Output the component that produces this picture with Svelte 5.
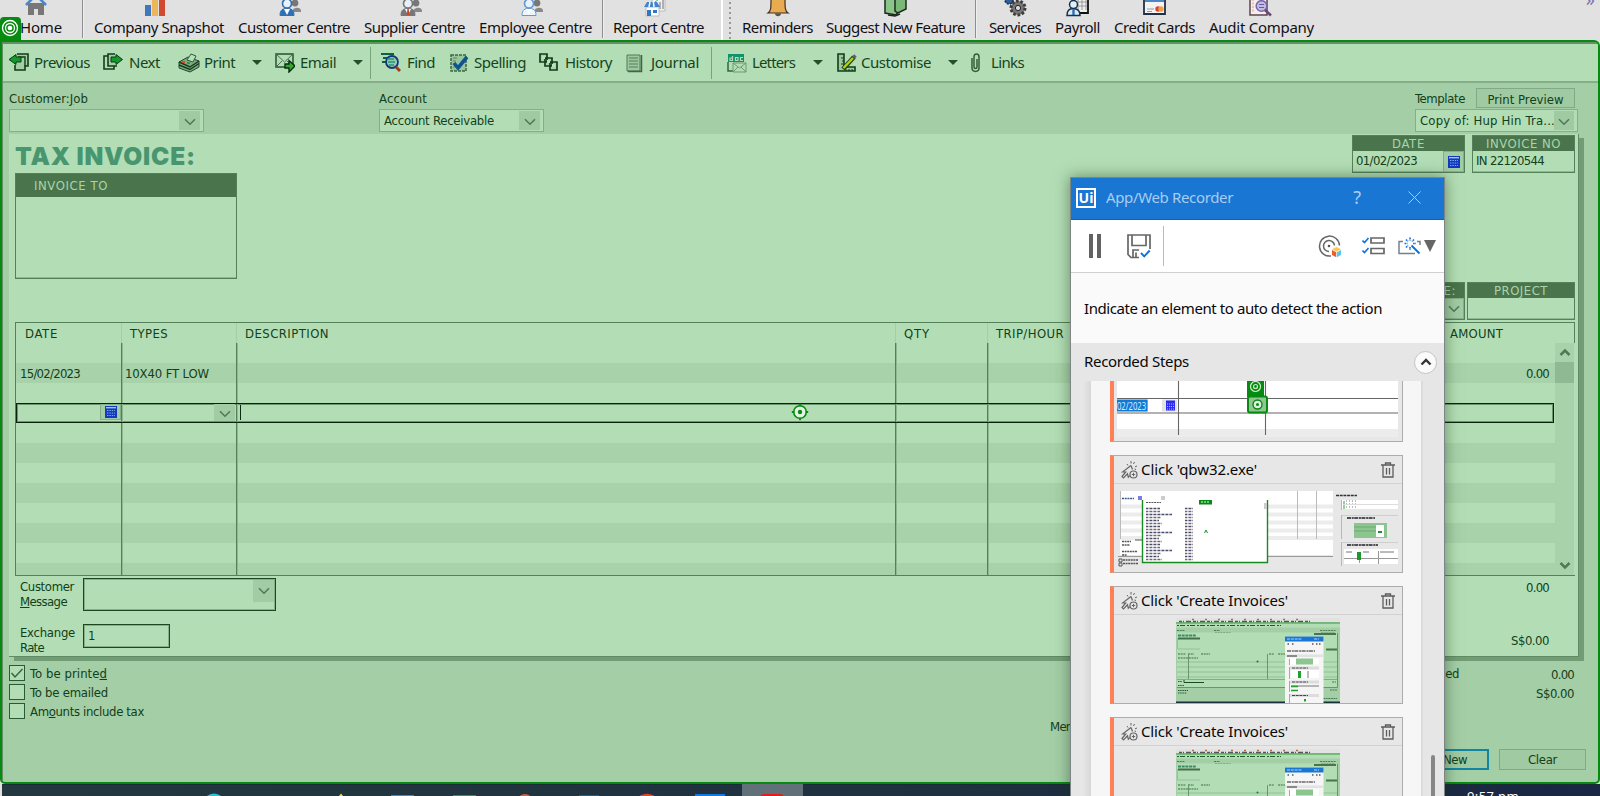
<script>
  // Spreads a label's letters so that it takes the given width.
  function fit(node, width) {
    const n = [...node.textContent].length;
    const natural = node.getBoundingClientRect().width;
    node.style.letterSpacing = (width - natural) / n + 'px';
  }

  const nav = [
    { id: 'home', label: 'Home', gap: 20, w: 42, dx: -5 },
    { sep: true, gap: 20 },
    { id: 'chart', label: 'Company Snapshot', gap: 11, w: 130, dx: -4 },
    { id: 'customer', label: 'Customer Centre', gap: 14, w: 112, dx: -4 },
    { id: 'supplier', label: 'Supplier Centre', gap: 14, w: 101, dx: -4 },
    { id: 'employee', label: 'Employee Centre', gap: 14, w: 113, dx: -4 },
    { sep: true, gap: 10 },
    { id: 'report', label: 'Report Centre', gap: 10, w: 91, dx: -4 },
    { grip: true, gap: 17 },
    { id: 'bell', label: 'Reminders', gap: 10, w: 71, dx: 0 },
    { id: 'suggest', label: 'Suggest New Feature', gap: 13, w: 139, dx: 0 },
    { sep: true, gap: 10 },
    { id: 'gears', label: 'Services', gap: 13, w: 52, dx: 1 },
    { id: 'payroll', label: 'Payroll', gap: 14, w: 45, dx: 0 },
    { id: 'card', label: 'Credit Cards', gap: 14, w: 81, dx: 0 },
    { id: 'audit', label: 'Audit Company', gap: 14, w: 105, dx: -1 }
  ];

  const tools = [
    { id: 'prev', label: 'Previous', gap: 6, iw: 20, tg: 5, w: 56 },
    { id: 'next', label: 'Next', gap: 13, iw: 20, tg: 6, w: 31 },
    { id: 'print', label: 'Print', gap: 18, iw: 22, tg: 4, w: 31 },
    { arrow: true, gap: 17 },
    { id: 'email', label: 'Email', gap: 13, iw: 20, tg: 5, w: 36 },
    { arrow: true, gap: 17 },
    { sep: true, gap: 7 },
    { id: 'find', label: 'Find', gap: 10, iw: 20, tg: 6, w: 28 },
    { id: 'spell', label: 'Spelling', gap: 15, iw: 19, tg: 5, w: 52 },
    { id: 'history', label: 'History', gap: 13, iw: 20, tg: 6, w: 47 },
    { id: 'journal', label: 'Journal', gap: 14, iw: 17, tg: 8, w: 48 },
    { sep: true, gap: 12 },
    { id: 'letters', label: 'Letters', gap: 15, iw: 20, tg: 5, w: 43 },
    { arrow: true, gap: 18 },
    { id: 'custom', label: 'Customise', gap: 14, iw: 20, tg: 4, w: 70 },
    { arrow: true, gap: 17 },
    { id: 'links', label: 'Links', gap: 12, iw: 11, tg: 10, w: 33 }
  ];

  const rows = [
    {},
    { date: '15/02/2023', type: '10X40 FT LOW', amount: '0.00' },
    {},
    { active: true },
    {}, {}, {}, {}, {}, {}, {}, {}
  ];

  const steps = [
    { title: "Click 'qbw32.exe'", w: 116, kind: 'list' },
    { title: "Click 'Create Invoices'", w: 147, kind: 'form' },
    { title: "Click 'Create Invoices'", w: 147, kind: 'form' }
  ];

  const checks = [
    { a: 'To be printe', u: 'd', b: '', w: 77, on: true },
    { a: 'To be emailed', u: '', b: '', w: 78 },
    { a: 'Am', u: 'o', b: 'unts include tax', w: 114 }
  ];
</script>

{#snippet t(text, w)}<span class="t" use:fit={w}>{text}</span>{/snippet}

{#snippet chev()}
  <svg class="chev" width="12" height="8" viewBox="0 0 12 8"><path d="M1 1.2 6 6.2 11 1.2" fill="none" stroke="#4f7a54" stroke-width="1.6" /></svg>
{/snippet}

{#snippet cal()}
  <svg width="12" height="12" viewBox="0 0 12 12">
    <rect width="12" height="12" fill="#1238c4" /><rect x="1" y="1" width="10" height="1.4" fill="#9fd0c8" />
    <path d="M2 4.5h8M2 7h8M2 9.5h8" stroke="#7fb0dc" stroke-width="1" stroke-dasharray="1.4 1" />
  </svg>
{/snippet}

{#snippet navIcon(id)}
  <svg width="24" height="17" viewBox="0 0 24 17">
    {#if id === 'home'}
      <path d="M4 3h16v12h-6V9h-4v6H4z" fill="#777" /><path d="M2 5 12-5 22 5" fill="none" stroke="#4a86cc" stroke-width="2.6" />
    {:else if id === 'chart'}
      <path d="M2 5h6v11H2z" fill="#3f78bd" /><path d="M9-2h6v18H9z" fill="#edb65a" /><path d="M16 0h6v16h-6z" fill="#cf4a31" />
    {:else if id === 'customer' || id === 'supplier' || id === 'employee'}
      {@const c = id === 'supplier' ? '#777' : id === 'customer' ? '#2f6fb5' : '#5f9ad6'}
      <circle cx="17" cy="3" r="3.400" fill="#777" /><path d="M14 12c0-5 9-6 9-1v1z" fill="#888" />
      <path d="M2 15.500c0-6 3-7 7-7s7 1 7 7z" fill={id === 'employee' ? '#eef5fc' : c} stroke={c} />
      <circle cx="9" cy="3.500" r="4.500" fill="#e8f1fa" stroke={c} stroke-width="1.600" />
      <path d="M9 9l-3 0 3 6 3-6z" fill="#fff" />{#if id === 'supplier'}<path d="M8.400 9h1.400l.6 6H7.800z" fill="#d0402a" />{/if}
    {:else if id === 'report'}
      <path d="M9-2h13v13H9z" fill="#f3f3f3" stroke="#bbb" /><path d="M14 9V5M17 9V2M20 9V0" stroke="#999" stroke-width="1.500" /><path d="M12 2l4-3 5-2" stroke="#57b879" fill="none" />
      <path d="M3 7h13v9H3z" fill="#fff" stroke="#bbb" /><path d="M1 7 4 2h10l3 5z" fill="#3f84cc" /><path d="M6 7l1-5M11 7l-.6-5" stroke="#fff" stroke-width="1.500" /><path d="M4 10h4v6H4zM10 10h4v3h-4z" fill="#2f78c4" />
    {:else if id === 'bell'}
      <path d="M9 13.500h6c0 3.600-6 3.600-6 0z" fill="#555" /><path d="M2 13c3-2 3-5 3-14h14c0 9 0 12 3 14z" fill="#e9ab50" stroke="#3e3220" stroke-width="1.200" />
    {:else if id === 'suggest'}
      <path d="M1-2h14v13l-3 4-11-2z" fill="#8cc58a" stroke="#1c2a1c" stroke-width="1.500" /><path d="M11-2h11v11l-8 4-3-2z" fill="#7ab779" stroke="#1c2a1c" stroke-width="1.500" /><path d="M4 15l7 1 5-2" stroke="#222" stroke-width="1.500" fill="none" />
    {:else if id === 'gears'}
      <circle cx="6" cy="0" r="4" fill="#2f5f96" stroke="#1d2d44" stroke-width="1.500" stroke-dasharray="2 1.200" />
      <circle cx="15" cy="8" r="7" fill="#777" stroke="#3c3c3c" stroke-width="3" stroke-dasharray="2.600 1.800" /><circle cx="15" cy="8" r="2.600" fill="#ddd" stroke="#222" />
    {:else if id === 'payroll'}
      <path d="M8-2h14v15H8z" fill="#eee" stroke="#111" stroke-width="1.800" /><path d="M12-2v12M16-2v12M20-2v12M9 2h12M9 6h12" stroke="#999" />
      <path d="M1 15.500c0-6 3-7 6-7s7 1 7 7z" fill="#dceaf7" stroke="#14314f" stroke-width="1.500" /><circle cx="7.500" cy="4.500" r="4" fill="#e4eef8" stroke="#14314f" stroke-width="1.500" /><path d="M7.500 9v6" stroke="#2b6db0" stroke-width="2.400" />
    {:else if id === 'card'}
      <path d="M1-3h21v17H1z" fill="#f3f3f3" stroke="#222f44" stroke-width="1.800" /><path d="M2-2h19v4H2z" fill="#4b86c6" /><path d="M4 9h7M4 11.500h5" stroke="#999" /><circle cx="15" cy="9" r="2.700" fill="#d8432c" /><circle cx="18" cy="9" r="2.700" fill="#efa046" />
    {:else}
      <path d="M1-3h17v18H1z" fill="#f6ecec" stroke="#5d4650" stroke-width="1.500" /><path d="M4-1v13" stroke="#d9b8a8" stroke-width="1.500" stroke-dasharray="2 1.500" /><circle cx="12.500" cy="6" r="5.300" fill="#c4bce4" stroke="#7466ab" stroke-width="1.500" /><path d="M10 4.500h5M10 7.500h5" stroke="#6a5a9e" /><path d="M16 10l6 5.500" stroke="#6a4a72" stroke-width="2.600" />
    {/if}
  </svg>
{/snippet}

{#snippet toolIcon(id, w)}
  <svg width={w} height="20" viewBox="0 0 {w} 20">
    {#if id === 'prev'}
      <path d="M8 1h11v12h-3v4H6v-5" fill="#a3cfa5" stroke="#123c18" stroke-width="1.600" /><path d="M9 4h7v9" fill="none" stroke="#123c18" stroke-width="1.400" /><path d="M0 6.500 7 1.500v2.500h5v5H7v2.500z" fill="#129a2c" stroke="#0b3a12" />
    {:else if id === 'next'}
      <path d="M12 1H5v12h9" fill="#a3cfa5" stroke="#123c18" stroke-width="1.600" /><path d="M5 3H1v13h10v-3" fill="none" stroke="#123c18" stroke-width="1.600" /><path d="M19.500 6.500 13 1.500v2.500H8v5h5v2.500z" fill="#129a2c" stroke="#0b3a12" />
    {:else if id === 'print'}
      <path d="M1 9l9-5 11 4v6l-9 5L1 15z" fill="#7fa982" stroke="#20482a" /><path d="M1 9l11 5 9-6M1 12l11 4.500 9-6" fill="none" stroke="#143c1c" stroke-width="1.500" /><path d="M9 7l4-6 5 2-3 6z" fill="#b9e0bb" stroke="#2e5c36" /><path d="M4 9h3" stroke="#d4502c" stroke-width="2" /><path d="M9 10h3" stroke="#1aa53a" stroke-width="2" />
    {:else if id === 'email'}
      <path d="M1 1h17v13H1z" fill="#b3deb5" stroke="#24502c" stroke-width="1.500" /><path d="M1 1l8.500 8L18 1M1 14l6-6M18 14l-6-6" fill="none" stroke="#47724b" /><path d="M10 11h4V7.500L20 13l-6 6v-4h-4z" fill="#35a92f" stroke="#072c0c" stroke-width="1.400" />
    {:else if id === 'find'}
      <path d="M0 1h13M2 5h7M1 9h6" stroke="#0d5f4c" stroke-width="2" /><circle cx="11" cy="9" r="6" fill="#8fcbb5" stroke="#17357a" stroke-width="1.800" /><path d="M6 6h7M7 9h7M8 12h5" stroke="#2a9470" stroke-width="1.300" /><path d="M15 14l4 4" stroke="#a33a1a" stroke-width="3" />
    {:else if id === 'spell'}
      <path d="M1 2h15v16H1z" fill="#9ac59d" stroke="#3b6842" stroke-width="1.500" stroke-dasharray="3 1" /><path d="M3 5h4M3 8h3M3 11h2M3 14h3" stroke="#5b8860" /><path d="M4 10l4 5L17 4" fill="none" stroke="#0d5591" stroke-width="3.600" />
    {:else if id === 'history'}
      <path d="M1 1h7v8H1zM6 5h7v8H6zM11 9h7v8h-7z" fill="#a9d4ab" stroke="#123c18" stroke-width="1.700" /><path d="M3 3h3v3H3zM8 7h3v3H8zM13 11h3v3h-3z" fill="#b9e3bb" />
    {:else if id === 'journal'}
      <path d="M1 2h13v16H1z" fill="#9cc79f" stroke="#4e7a53" /><path d="M3 5h9M3 8h9M3 11h9M3 14h9" stroke="#54805a" /><path d="M15.500 2v16.500H2" fill="none" stroke="#3e6843" stroke-width="1.500" />
    {:else if id === 'letters'}
      <path d="M1 1h16v8H1z" fill="#12926c" /><path d="M5.500 3v4.500H3V5h2.500M8.500 4.500H11v3H8.500zM16 4.500h-2.500v3H16" fill="none" stroke="#b3deb5" stroke-width="1.200" /><path d="M1 9v9h6" fill="none" stroke="#2f6938" stroke-width="1.500" /><path d="M6 10h13v9H6z" fill="#b3deb5" stroke="#6d9a72" /><path d="M6 10l6.500 5L19 10M6 19l5-5M19 19l-5-5" fill="none" stroke="#6d9a72" />
    {:else if id === 'custom'}
      <path d="M1 1h6v13h11v4H1z" fill="#9dc8a0" stroke="#123c18" stroke-width="1.600" /><path d="M4 5h3M5 8h2M4 11h3M9 16v2M12 16v2M15 16v2" stroke="#123c18" /><path d="M6 16 17 4" stroke="#22441a" stroke-width="4.600" /><path d="M6.500 15 16 5" stroke="#b5d400" stroke-width="2.400" /><path d="M16.500 4.500l2-2" stroke="#6b5a78" stroke-width="3.400" />
    {:else}
      <path d="M2 5v10c0 4.500 7 4.500 7 0V4c0-4-5-4-5 0v10c0 2 3 2 3 0V6" fill="none" stroke="#315f39" stroke-width="1.500" />
    {/if}
  </svg>
{/snippet}

{#snippet bin()}
  <svg width="14" height="16" viewBox="0 0 14 16"><path d="M0 3h14M4.500 3V1h5v2M2 3v12h10V3M5.500 6v6.500M8.500 6v6.500" fill="none" stroke="#5c5c5c" stroke-width="1.300" /></svg>
{/snippet}

{#snippet clicker()}
  <svg width="17" height="18" viewBox="0 0 17 18">
    <path d="M10 4.500 1.500 11h3.200L1 15.500 2.500 17l4-4.200.8 3.400 1.500-1.500M10 4.500l1.500 4" fill="none" stroke="#666" stroke-width="1.200" />
    <circle cx="12.500" cy="13.500" r="3.500" fill="none" stroke="#666" stroke-width="1.200" /><path d="M10.800 13.500h3.400M12.500 11.800v3.400" stroke="#666" />
    <path d="M6 3 7 4.500M10 0v2.500M13.500 1 12.500 3M16 5l-2 .8M15 8.500l-1.500-.5" stroke="#666" />
  </svg>
{/snippet}

{#snippet formThumb()}
  <svg width="164" height="85" viewBox="0 0 164 85">
    <rect width="164" height="85" fill="#a4cea6" /><rect width="164" height="5" fill="#e2e2e2" />
    <path d="M3 3.500h132" stroke="#555" stroke-width="1.300" stroke-dasharray="3 1 1 2 5 2" /><path d="M16 1.500h110" stroke="#b06a50" stroke-width="1.500" stroke-dasharray="2 11" />
    <rect y="4.500" width="164" height="1.200" fill="#078a10" /><rect y="5.500" width="164" height="4" fill="#b3deb5" /><path d="M1 7.500h104" stroke="#1d5a27" stroke-dasharray="2 1 5 2" />
    <path d="M1 12.500h8M38 12.500h6M144 12.500h16M39 14.500h16M145 14.500h14" stroke="#4d7d53" stroke-dasharray="2 .7" />
    <rect x="1" y="14.500" width="160" height="55" fill="#b3deb5" /><path d="M1 69.500h160.500V15" fill="none" stroke="#69956d" />
    <path d="M2 17.500h18" stroke="#3b8b66" stroke-width="2" stroke-dasharray="3 .7" /><rect x="2" y="19.500" width="22" height="2" fill="#43704a" /><path d="M1.500 20v11H24" fill="none" stroke="#8bb88f" stroke-width=".7" />
    <path d="M138 16h22M150 31.500h11" stroke="#4a754c" stroke-width="2" />
    <path d="M1 44h160M1 49h160M1 54h160M1 59h160" stroke="#a4cea6" stroke-width="2" />
    <path d="M2 36h8M12 36h6M25 36h9M93 36h5M102 36h8M2 40h20" stroke="#39713f" stroke-dasharray="2 .7" />
    <path d="M12.500 36v25M91.500 36v25" stroke="#628d68" stroke-width=".9" /><path d="M1 61.500h160" stroke="#628d68" stroke-width=".6" />
    <circle cx="81.500" cy="43.500" r="1" fill="#078a10" /><path d="M2 63.500h4M2 67.500h6M2 72.500h10M2 75h9" stroke="#275c2d" stroke-dasharray="1.500 .7" /><path d="M8 62v2.500h20" fill="none" stroke="#184c20" />
    <path d="M156 64h4M154 72h7M147 80.500h14" stroke="#477a4c" stroke-dasharray="2 .6" />
    <rect y="83.500" width="164" height="1.500" fill="#1c2d3b" />
    <rect x="109" y="18.500" width="38.500" height="66.500" fill="#f5f5f5" /><rect x="109" y="18.500" width="38.500" height="5" fill="#1976d2" /><path d="M111 21h15M138 21h5" stroke="#b4d6f7" stroke-dasharray="3 .8" />
    <path d="M111.500 26h2M116 26h2M136 26h2M140 26h5" stroke="#555" stroke-width="1.500" stroke-dasharray="1.500 1.500" /><path d="M111 33h28" stroke="#222" stroke-width="1.200" stroke-dasharray="4 .8 2 .5" />
    <rect x="109" y="36.500" width="38.500" height="2.500" fill="#e2e2e2" /><path d="M111 38h10" stroke="#333" />
    <rect x="114" y="40.500" width="29" height="6" fill="#fff" /><rect x="120" y="40.500" width="17" height="6" fill="#8cc590" />
    <rect x="113" y="48.500" width="30" height="3" fill="#ddd" /><rect x="113" y="62.500" width="30" height="3" fill="#ddd" /><rect x="113" y="76" width="30" height="3" fill="#ddd" />
    <path d="M116 50h16M116 64h16M116 77.500h16" stroke="#444" stroke-dasharray="3 .7" />
    <rect x="115" y="52" width="28" height="8" fill="#fff" /><rect x="122" y="53" width="3" height="7" fill="#1fa02d" /><path d="M132 53v7M115 68h28" stroke="#777" /><path d="M115 68.500h7M115 72.500h7" stroke="#1fa02d" stroke-width="1.500" /><rect x="128" y="81" width="2" height="2.500" fill="#1fa02d" />
    <path d="M113.500 41v6M113.500 49v12M113.500 63v11M113.500 76v9" stroke="#ff8a5c" />
  </svg>
{/snippet}

{#snippet listThumb()}
  <svg width="280" height="76" viewBox="0 0 280 76">
    <rect width="280" height="76" fill="#e7e7e7" /><rect x="2" width="213" height="64" fill="#fff" />
    <path d="M2 15.500h213M2 23.500h213M2 31.500h213M2 39.500h213M2 47h213" stroke="#ececec" stroke-width="4" />
    <path d="M2.500 0v48M179.500 0v48M198.500 0v48" stroke="#bbb" /><path d="M0 65.500h215" stroke="#999" />
    <path d="M4 7.500h12" stroke="#3a5f88" stroke-width="1.500" stroke-dasharray="2 .7" /><rect x="20" y="5" width="4" height="4" fill="#7f7ae6" /><rect x="43" y="5" width="4" height="4" fill="#ccc" />
    <rect x="25" y="9" width="125" height="62.500" fill="#fff" /><path d="M24.500 9v62.500H149.500V9" fill="none" stroke="#168b20" stroke-width="1.400" />
    <rect x="81" y="9" width="13" height="4.500" fill="#078a10" /><path d="M83 11h9" stroke="#e8ffe8" stroke-dasharray="2 1" />
    <rect x="146" y="12" width="3" height="6" fill="#ccc" />
    <path d="M28 11.500h15" stroke="#555" stroke-dasharray="2 .7" />
    {#each Array(18) as _, i}
      <path d="M28 {17.500 + i * 3}h{[14, 14, 26, 15, 13, 16][i % 6]}M67 {17.500 + i * 3}h8" stroke={i % 2 ? '#7a6270' : '#454d6a'} stroke-width="1.500" stroke-dasharray="2 .6 1 .4" />
    {/each}
    <path d="M86.500 42l1.500-3 1.500 3" fill="none" stroke="#179427" />
    <path d="M4 50.500h9M4 54h8M4 60.500h15M4 64h5M5 69h15M5 72.500h15" stroke="#555" stroke-width="1.300" stroke-dasharray="2 .6" /><path d="M1 68h3v3H1zM1 72h3v3H1zM17 49h7" fill="none" stroke="#555" />
    <path d="M218 4.500h21" stroke="#333" stroke-width="1.500" stroke-dasharray="3 .7" /><rect x="223" y="9" width="57" height="9" fill="#fff" />
    <path d="M223.500 9v10M223.500 24v24M223.500 51v24" stroke="#ff9f7c" /><path d="M226 10v8" stroke="#2f9c3a" /><path d="M228 10h12M228 13h12M228 16h11" stroke="#777" stroke-dasharray="1 2" /><path d="M225 13.500h55" stroke="#ddd" />
    <path d="M229 27h28M229 54h31" stroke="#222" stroke-width="1.500" stroke-dasharray="4 .7 2 .5" /><path d="M224 24.500h56M224 51.500h56" stroke="#c4c4c4" stroke-width=".7" /><rect x="236" y="32" width="33" height="15" fill="#8cc590" /><path d="M236 36h22M236 40h22" stroke="#5a9a60" stroke-width=".6" /><rect x="258" y="34" width="8" height="12" fill="#fff" /><path d="M260 41h4" stroke="#1b8f29" stroke-width="2" />
    <rect x="226" y="58" width="54" height="15" fill="#fff" /><path d="M226 67.500h54M241.500 62v10M260.500 60v13" stroke="#999" /><path d="M228 61h6M245 61h6M262 61h14" stroke="#777" /><rect x="239" y="61" width="4" height="8" fill="#1b9a2b" />
  </svg>
{/snippet}

<div class="screen">
  <nav class="nav">
    {#each nav as n}
      {#if n.sep}
        <i class="nsep" style="margin-left:{n.gap}px"></i>
      {:else if n.grip}
        <i class="grip" style="margin-left:{n.gap}px"></i>
      {:else}
        <div class="nitem" style="margin-left:{n.gap}px;width:{n.w}px">
          <span class="nicon" style="padding-right:{Math.max(0, -n.dx) * 2}px">{@render navIcon(n.id)}</span>
          {@render t(n.label, n.w)}
        </div>
      {/if}
    {/each}
    <span class="more">»</span>
  </nav>

  <div class="frame">
    <div class="tools">
      {#each tools as b}
        {#if b.sep}
          <i class="tsep" style="margin-left:{b.gap}px"></i>
        {:else if b.arrow}
          <i class="tri" style="margin-left:{b.gap}px"></i>
        {:else}
          <div class="tool" style="margin-left:{b.gap}px;gap:{b.tg}px">
            {@render toolIcon(b.id, b.iw)}{@render t(b.label, b.w)}
          </div>
        {/if}
      {/each}
    </div>

    <div class="form">
      <div class="field job">
        <div class="lbl"><span class="t" use:fit={79}>Customer:<u>J</u>ob</span></div>
        <div class="select"><span></span><b>{@render chev()}</b></div>
      </div>
      <div class="field acc">
        <div class="lbl">{@render t('Account', 48)}</div>
        <div class="select">{@render t('Account Receivable', 110)}<b>{@render chev()}</b></div>
      </div>
      <div class="field tpl">
        <div class="lbl">{@render t('Template', 50)}<button class="btn preview">{@render t('Print Preview', 76)}</button></div>
        <div class="select">{@render t('Copy of: Hup Hin Tra...', 135)}<b>{@render chev()}</b></div>
      </div>
    </div>

    <section class="page">
      <div class="head">
        <div class="left">
          <h1>{@render t('TAX INVOICE:', 181)}</h1>
          <div class="box to"><div class="cap">{@render t('INVOICE TO', 74)}</div></div>
        </div>
        <div class="right">
          <div class="pair">
            <div class="box w113"><div class="cap">{@render t('DATE', 33)}</div><div class="val">{@render t('01/02/2023', 61)}<b class="calbtn">{@render cal()}</b></div></div>
            <div class="box w103"><div class="cap">{@render t('INVOICE NO', 75)}</div><div class="val">{@render t('IN 22120544', 68)}</div></div>
          </div>
          <div class="pair low">
            <div class="box w113"><div class="cap rate">{@render t('RATE:', 36)}</div><div class="val"><span></span><b class="calbtn">{@render chev()}</b></div></div>
            <div class="box w108"><div class="cap">{@render t('PROJECT', 54)}</div><div class="val"></div></div>
          </div>
        </div>
      </div>

      <div class="table">
        <div class="grid thead">
          <span>{@render t('DATE', 33)}</span><span>{@render t('TYPES', 38)}</span><span>{@render t('DESCRIPTION', 84)}</span><span>{@render t('QTY', 26)}</span><span>{@render t('TRIP/HOUR', 68)}</span><span class="amt">{@render t('AMOUNT', 53)}</span>
        </div>
        <div class="body">
          <div class="rows">
            {#each rows as r, i}
              <div class="grid row" class:alt={i % 2 === 1 && !r.active} class:active={r.active}>
                <span>{#if r.date}{@render t(r.date, 60)}{/if}{#if r.active}<b class="calbtn">{@render cal()}</b>{/if}</span>
                <span class="type">{#if r.type}{@render t(r.type, 84)}{/if}{#if r.active}<b class="drop">{@render chev()}</b>{/if}</span>
                <span>{#if r.active}<i class="caret"></i>{/if}</span>
                <span></span><span class="last"></span>
                <span class="num">{#if r.amount}{@render t(r.amount, 23)}{/if}</span>
              </div>
            {/each}
          </div>
          <div class="scroll">
            <svg width="12" height="8" viewBox="0 0 12 8"><path d="M1.500 7 6 2.500 10.500 7" fill="none" stroke="#4f7a54" stroke-width="2.500" /></svg>
            <i></i>
            <svg class="dn" width="12" height="8" viewBox="0 0 12 8"><path d="M1.500 1 6 5.500 10.500 1" fill="none" stroke="#4f7a54" stroke-width="2.500" /></svg>
          </div>
        </div>
      </div>

      <div class="foot">
        <div class="inputs">
          <div class="line msg"><span class="two"><span class="t" use:fit={54}>Customer</span><span class="t" use:fit={47}><u>M</u>essage</span></span><div class="in big"><b>{@render chev()}</b></div></div>
          <div class="line"><span class="two">{@render t('Exchange', 55)}{@render t('Rate', 24)}</span><div class="in">{@render t('1', 7)}</div></div>
        </div>
        <div class="totals">{@render t('0.00', 23)}{@render t('S$0.00', 38)}</div>
      </div>
    </section>

    <div class="under">
      <div class="checks">
        {#each checks as c}
          <div class="check"><i>{#if c.on}<svg width="14" height="14" viewBox="0 0 14 14"><path d="M1.500 7 5 11 12.500 3" fill="none" stroke="#37653d" stroke-width="1.500" /></svg>{/if}</i><span class="t" use:fit={c.w}>{c.a}<u>{c.u}</u>{c.b}</span></div>
        {/each}
      </div>
      <div class="memo">{@render t('Memo', 33)}</div>
      <div class="sum">
        <div class="applied">{@render t('Payments Applied', 98)}</div>
        <div class="nums">{@render t('0.00', 23)}{@render t('S$0.00', 38)}</div>
        <div class="btns"><button class="btn new">{@render t('Save & New', 66)}</button><button class="btn clear">{@render t('Clear', 29)}</button></div>
      </div>
    </div>
  </div>

  <footer class="taskbar">
    <svg width="820" height="12" viewBox="0 0 820 12">
      <rect x="742" width="61" height="12" fill="#62707a" />
      <circle cx="214" cy="21" r="11.500" fill="#2fc0d4" /><path d="M339 12l2-2.500 2 2.500z" fill="#f2e04a" />
      <path d="M391 11h23v1h-23z" fill="#3a8ad8" /><path d="M453 11h23v1h-23z" fill="#2f8f6c" /><circle cx="525" cy="18" r="8" fill="#c8644c" /><path d="M579 11h20v1h-20z" fill="#1d5f92" />
      <ellipse cx="647" cy="15" rx="9" ry="5.200" fill="#e0452f" /><path d="M695 10h30v2h-30z" fill="#1478e0" /><rect x="760" y="10" width="24" height="8" rx="4" fill="#e31c1c" />
    </svg>
    <span class="clock">{@render t('9:57 pm', 52)}</span>
  </footer>

  <div class="tag"><svg width="18" height="18" viewBox="0 0 18 18" fill="none" stroke="#fff" stroke-width="1.300"><circle cx="9" cy="9" r="7.500" /><circle cx="9" cy="9" r="4.500" /><circle cx="9" cy="9" r="1.700" fill="#fff" /></svg></div>
  <svg class="target" width="18" height="18" viewBox="0 0 18 18"><circle cx="9" cy="9" r="6.300" fill="#e4f2e5" stroke="#078a10" stroke-width="1.600" /><circle cx="9" cy="9" r="2.200" fill="#078a10" /><path d="M9 .8v2.500M9 14.700v2.500M.8 9h2.500M14.700 9h2.500" stroke="#078a10" stroke-width="1.800" /></svg>

  <aside class="rec">
    <header>
      <span class="ui">Ui</span>{@render t('App/Web Recorder', 127)}
      <span class="q">?</span>
      <svg width="13" height="13" viewBox="0 0 13 13"><path d="M.5.500l12 12M12.500.500l-12 12" stroke="#a6cdf2" /></svg>
    </header>
    <div class="rtools">
      <svg class="pause" width="12" height="24" viewBox="0 0 12 24"><path d="M0 0h4v24H0zM8 0h4v24H8z" fill="#626262" /></svg>
      <svg class="save" width="24" height="25" viewBox="0 0 24 25"><path d="M12 23.500H4L1 20.500V1h22v14M5 1v10.500h14V1M6 23v-7h6M9 18.500v4.500" fill="none" stroke="#666" stroke-width="1.700" /><path d="M14 19l3.200 3.300 5.500-5.800" fill="none" stroke="#0a73e0" stroke-width="1.900" /></svg>
      <i class="vs"></i>
      <svg class="aim" width="24" height="25" viewBox="0 0 24 25"><path d="M13 22A10 10 0 1 1 21.500 11.500M11 17.500A5.500 5.500 0 1 1 16.500 11.500" fill="none" stroke="#666" stroke-width="1.500" /><circle cx="11" cy="12" r="1.300" fill="#555" /><path d="M18.500 13l4.500 2.200-4.500 2.300-4.500-2.300z" fill="#fdc84b" /><path d="M14 16l4.200 2.200v5L14 21z" fill="#ef5a2c" /><path d="M23 16l-4.200 2.200v5L23 21z" fill="#5bc4ee" /></svg>
      <svg class="lst" width="23" height="18" viewBox="0 0 23 18"><path d="M9 1h13v5H9zM9 11.500h13v5H9z" fill="none" stroke="#666" stroke-width="1.700" /><path d="M.5 3.500l2 2L6.500 1M.5 13.500l2 2L6.500 11" fill="none" stroke="#0a73e0" stroke-width="1.600" /></svg>
      <svg class="wiz" width="24" height="18" viewBox="0 0 24 18"><path d="M5 4.500H1v12h16M19 4.500h3V8" fill="none" stroke="#75808a" stroke-width="1.500" /><path d="M12 .5v3M12 10v3M6.500 6.500h3M15 6.500h3M8 2.500l2 2M16 2.500l-2 2M8 10.500l2-2" stroke="#0a73e0" stroke-width="1.600" stroke-dasharray="1.700 .6" /><path d="M13.500 8.500l8 8" stroke="#0a73e0" stroke-width="1.900" /></svg>
      <svg class="dtri" width="12" height="12" viewBox="0 0 12 12"><path d="M0 0h12L6 12z" fill="#666" /></svg>
    </div>
    <div class="hint">{@render t('Indicate an element to auto detect the action', 298)}</div>
    <div class="rhead">{@render t('Recorded Steps', 105)}<span class="up"><svg width="12" height="8" viewBox="0 0 12 8"><path d="M1.500 6.500 6 2l4.500 4.500" fill="none" stroke="#333" stroke-width="2.400" /></svg></span></div>
    <div class="rbody">
      <div class="list">
        <div class="card first">
          <svg width="281" height="56" viewBox="0 0 281 56">
            <rect width="281" height="56" fill="#fff" /><rect y="48" width="281" height="8" fill="#ececec" />
            <path d="M0 17.500h281M0 32h281M61.500 0v54M148.500 0v54" stroke="#666" stroke-width="1.100" />
            <rect y="18.500" width="30" height="12" fill="#0f7ad6" /><path d="M30.500 18.500v12" stroke="#e8834a" /><text x="0" y="28.500" font-size="11" textLength="29" lengthAdjust="spacingAndGlyphs" fill="#dcecfb">02/2023</text>
            <rect x="45" y="18.500" width="15" height="12" fill="#e3e3e3" /><rect x="49" y="19.500" width="9" height="10" fill="#2a2af0" /><path d="M50 23h7M50 25.500h7M50 28h7" stroke="#b9b9ff" stroke-dasharray="1 1" />
            <rect x="130" width="17" height="16" fill="#078a10" /><circle cx="138.500" cy="5.500" r="5" fill="none" stroke="#c9f0cb" stroke-width="1.200" /><circle cx="138.500" cy="5.500" r="2" fill="none" stroke="#c9f0cb" stroke-width="1.200" />
            <rect x="131" y="15.500" width="19" height="16" rx="2" fill="#8fc693" stroke="#078a10" stroke-width="2" /><circle cx="140.500" cy="23.500" r="4.500" fill="#dff1e0" stroke="#078a10" stroke-width="1.400" /><circle cx="140.500" cy="23.500" r="1.500" fill="#078a10" />
          </svg>
        </div>
        {#each steps as s}
          <div class="card">
            <div class="chead">{@render clicker()}{@render t(s.title, s.w)}<span class="bin">{@render bin()}</span></div>
            <div class="thumb">{#if s.kind === 'form'}{@render formThumb()}{:else}<div class="wide">{@render listThumb()}</div>{/if}</div>
          </div>
        {/each}
      </div>
      <i class="bar"></i>
    </div>
  </aside>
</div>

<style>
  :global(body) { margin: 0; overflow: hidden; }
  .screen { position: relative; width: 1600px; height: 796px; overflow: hidden; background: #e1e1e1; font: 13px/1 "DejaVu Sans Condensed", "DejaVu Sans", sans-serif; font-stretch: condensed; color: #12401a; }
  .screen :global(*) { box-sizing: border-box; }
  svg { display: block; flex: none; }
  .t { display: inline-block; flex: none; white-space: pre; }
  u { text-underline-offset: 1px; }

  .nav { height: 40px; display: flex; font: 15px/21px "Noto Sans", sans-serif; color: #101014; }
  .nitem { flex: none; }
  .nicon { display: flex; justify-content: center; height: 16px; }
  .nitem .t { line-height: 22px; }
  .nsep { width: 1px; height: 38px; background: #8e8e8e; flex: none; box-shadow: 1px 0 #efefef; }
  .grip { width: 11px; height: 40px; flex: none; border-left: 2px solid #fff; background: radial-gradient(circle at 7px 3px, #999 1px, transparent 1.400px) 0 0 / 100% 5px; }
  .more { margin: -11px 5px 0 auto; color: #7272b0; font-size: 18px; }

  .frame { height: 744px; border: 2px solid #078a10; border-radius: 0 6px 5px 5px; background: #a4cea6; overflow: hidden; box-shadow: inset 1px 2px #668f69; padding: 2px 0 0 1px; }
  .tools { height: 39px; display: flex; align-items: center; background: #b3deb5; border-bottom: 2px solid #86ae88; font: 15px/21px "Noto Sans", sans-serif; color: #164420; }
  .tool { display: flex; align-items: center; flex: none; }
  .tsep { width: 1px; height: 32px; background: #79a37c; flex: none; }
  .tri { border: 5px solid transparent; border-top: 5px solid #23502a; border-bottom: 0; flex: none; }

  .form { height: 51px; padding: 5px 20px 0 6px; display: flex; }
  .job { width: 195px; }
  .acc { width: 165px; margin-left: 175px; }
  .tpl { width: 163px; margin-left: auto; }
  .lbl { height: 21px; line-height: 22px; display: flex; }
  .select { height: 23px; border: 1px solid #86ae88; background: #b3deb5; display: flex; justify-content: space-between; padding: 1px 3px 1px 4px; line-height: 20px; }
  .select b { width: 21px; background: #a0caa2; display: flex; align-items: center; justify-content: center; padding-top: 3px; }
  .tpl .select b { margin-left: -1px; }
  .btn { font: inherit; color: inherit; padding: 0; background: #a0caa2; border: 1px solid #80aa83; flex: none; text-align: center; }
  .preview { width: 99px; height: 20px; margin-left: 11px; }

  .page { margin-left: 6px; width: 1570px; height: 523px; background: #b3deb5; border: 0 solid #5f8c63; border-width: 0 1px 1px 0; box-shadow: 5px 4px #729c75; padding: 0 3px 0 6px; }
  .head { height: 188px; display: flex; justify-content: space-between; }
  h1 { margin: 0; padding: 6px 0 0 0; height: 39px; font: 900 24.5px/32px Inter, sans-serif; color: #489670; }
  .box { border: 1px solid #54805a; box-shadow: inset 0 -1px #8db890; flex: none; }
  .cap { background: #4a754c; color: #a9d4ab; line-height: 15px; height: 15px; text-align: center; }
  .to { width: 222px; height: 106px; }
  .to .cap { height: 23px; text-align: left; padding-left: 18px; line-height: 23px; }
  .pair { display: flex; gap: 7px; padding-top: 1px; justify-content: flex-end; }
  .pair .box { height: 38px; }
  .low { padding-top: 109px; gap: 2px; }
  .w113 { width: 113px; } .w103 { width: 103px; } .w108 { width: 108px; }
  .rate { text-align: right; padding-right: 8px; }
  .val { height: 21px; display: flex; justify-content: space-between; padding-left: 3px; line-height: 20px; }
  .calbtn { width: 21px; background: #a2cca4; border: 1px solid #86ae88; display: flex; align-items: center; justify-content: center; margin-left: auto; }

  .table { height: 254px; border: solid #54805a; border-width: 1px 0 1px 1px; }
  .grid { display: grid; grid-template-columns: 106px 115px 659px 92px 448px 1fr; height: 20px; line-height: 20px; }
  .thead { border-right: 1px solid #54805a; line-height: 22px; }
  .thead > span { padding-left: 8px; box-shadow: inset -1px 0 #a4cea6; }
  .thead > .amt { padding-left: 14px; box-shadow: none; }
  .thead > span:first-child { padding-left: 9px; }
  .body { display: flex; height: 232px; }
  .rows { flex: 1; overflow: hidden; }
  .row > span { display: flex; padding-left: 4px; border-right: 1px solid #54805a; box-shadow: 1px 0 #8db890; line-height: 22px; }
  .row > span.type { padding-left: 3px; }
  .row > span.last, .row > span.num { border: 0; box-shadow: none; }
  .row .num { justify-content: flex-end; padding-right: 6px; }
  .alt { background: #a8d2aa; }
  .active { outline: 1px solid #08240d; outline-offset: -1px; box-shadow: inset 0 0 0 2px #6b956e; margin-right: 1px; }
  .active .calbtn { height: 16px; margin-top: 1px; }
  .drop { width: 21px; height: 17px; margin: 1px 1px 0 auto; background: #a2cca4; display: flex; justify-content: center; align-items: center; padding-top: 3px; }
  .caret { width: 1px; height: 15px; margin: 2px 0 0 -1px; background: #0b2c11; }
  .scroll { width: 19px; margin-right: 1px; background: #a8d2aa; display: flex; flex-direction: column; align-items: center; padding: 5px 0; }
  .scroll i { width: 19px; height: 21px; margin-top: 6px; background: #8fb992; }
  .dn { margin-top: auto; }

  .foot { display: flex; justify-content: space-between; padding: 2px 26px 0 5px; }
  .line { display: flex; }
  .msg { height: 46px; }
  .two { width: 63px; line-height: 15px; display: flex; flex-direction: column; align-items: flex-start; padding-top: 1px; }
  .in { width: 87px; height: 24px; border: 1px solid #1b4722; box-shadow: inset 0 0 0 1px #86b08a; padding-left: 4px; line-height: 21px; }
  .big { width: 193px; height: 33px; display: flex; justify-content: flex-end; padding-right: 1px; }
  .big b { width: 21px; height: 22px; background: #a2cca4; display: flex; align-items: center; justify-content: center; margin: 1px 0; }
  .totals { display: flex; flex-direction: column; align-items: flex-end; line-height: 19px; gap: 34px; }

  .under { display: flex; height: 125px; padding: 8px 0 0 6px; }
  .checks { width: 1041px; }
  .check { display: flex; gap: 5px; height: 19px; line-height: 17px; }
  .check i { width: 16px; height: 16px; border: 1px solid #2b5a32; background: #b3deb5; }
  .memo { padding-top: 53px; width: 300px; line-height: 17px; }
  .sum { flex: 1; display: grid; grid-template-columns: 1fr 1fr; grid-template-rows: 84px 22px; }
  .applied { line-height: 17px; padding-left: 11px; }
  .nums { display: flex; flex-direction: column; align-items: flex-end; line-height: 19px; padding-right: 24px; }
  .btns { grid-column: 1 / 3; display: flex; justify-content: flex-end; gap: 10px; padding-right: 12px; }
  .btns .btn { height: 21px; }
  .new { width: 110px; border: 2px solid #0f87a2; }
  .clear { width: 87px; }

  .taskbar { height: 12px; margin-left: 2px; background: linear-gradient(90deg, #23383f, #1f3040 60%, #1a2745); display: flex; overflow: hidden; box-shadow: inset 0 1px #1a2c35; }
  .taskbar svg { margin-left: -2px; }
  .clock { margin: 4px 81px 0 auto; color: #fff; font: 13px/17px "Noto Sans", sans-serif; }
  .tag { position: absolute; left: 0; top: 17px; width: 21px; height: 24px; background: #078a10; border-radius: 4px 4px 0 0; padding: 2px 1px; }
  .target { position: absolute; left: 791px; top: 403px; }

  .rec { position: absolute; left: 1070px; top: 177px; width: 375px; height: 640px; border: 1px solid #7f8587; background: #e6e6e6; box-shadow: 0 0 14px rgba(20, 50, 20, .5); font: 15px/21px "Noto Sans", sans-serif; color: #080808; display: flex; flex-direction: column; }
  header { height: 42px; background: #1976d2; border-bottom: 1px solid #1560ae; color: #a6cdf2; display: flex; align-items: center; padding: 0 23px 2px 5px; flex: none; }
  .ui { width: 20px; height: 20px; border: 2px solid #fff; color: #fff; font: 700 14px/15px "Open Sans", sans-serif; text-align: center; margin-right: 10px; }
  .q { margin-left: auto; margin-right: 47px; font-size: 18px; }
  .rtools { height: 53px; background: #fff; border-bottom: 1px solid #d0d0d0; display: flex; align-items: center; flex: none; }
  .pause { margin-left: 18px; }
  .save { margin-left: 26px; }
  .vs { width: 1px; height: 40px; background: #bbb; margin-left: 12px; }
  .aim { margin-left: 154px; }
  .lst { margin-left: 20px; }
  .wiz { margin-left: 13px; }
  .dtri { margin-left: 2px; }
  .hint { height: 70px; background: #fafafa; padding-left: 13px; line-height: 70px; flex: none; }
  .rhead { height: 38px; padding: 0 7px 0 13px; display: flex; justify-content: space-between; align-items: center; flex: none; line-height: 19px; }
  .rhead > :global(.t) { margin-top: -2px; }
  .up { width: 23px; height: 23px; border: 1px solid #c4c4c4; border-radius: 50%; background: #fafafa; display: flex; align-items: center; justify-content: center; }
  .rbody { flex: 1; display: flex; overflow: hidden; background: linear-gradient(90deg, #e6e6e6 12px, #d8d8d8 20px, #e6e6e6 20px); }
  .list { width: 332px; margin-left: 20px; background: #f6f6f6; border-right: 2px solid #dcdcdc; padding-left: 19px; }
  .card { width: 293px; height: 118px; margin-bottom: 13px; background: #e7e7e7; border: 1px solid #acacac; border-left: 4px solid #ff8055; }
  .first { height: 61px; border-top: 0; padding-left: 3px; }
  .chead { height: 28px; border-bottom: 1px solid #d2d2d2; display: flex; align-items: center; gap: 3px; padding: 0 7px 0 7px; }
  .bin { margin-left: auto; }
  .thumb { display: flex; justify-content: center; padding-top: 3px; }
  .wide { padding-top: 4px; }
  .bar { width: 4px; height: 60px; margin: 374px 0 0 8px; background: #868686; border-radius: 2px; flex: none; }
</style>
